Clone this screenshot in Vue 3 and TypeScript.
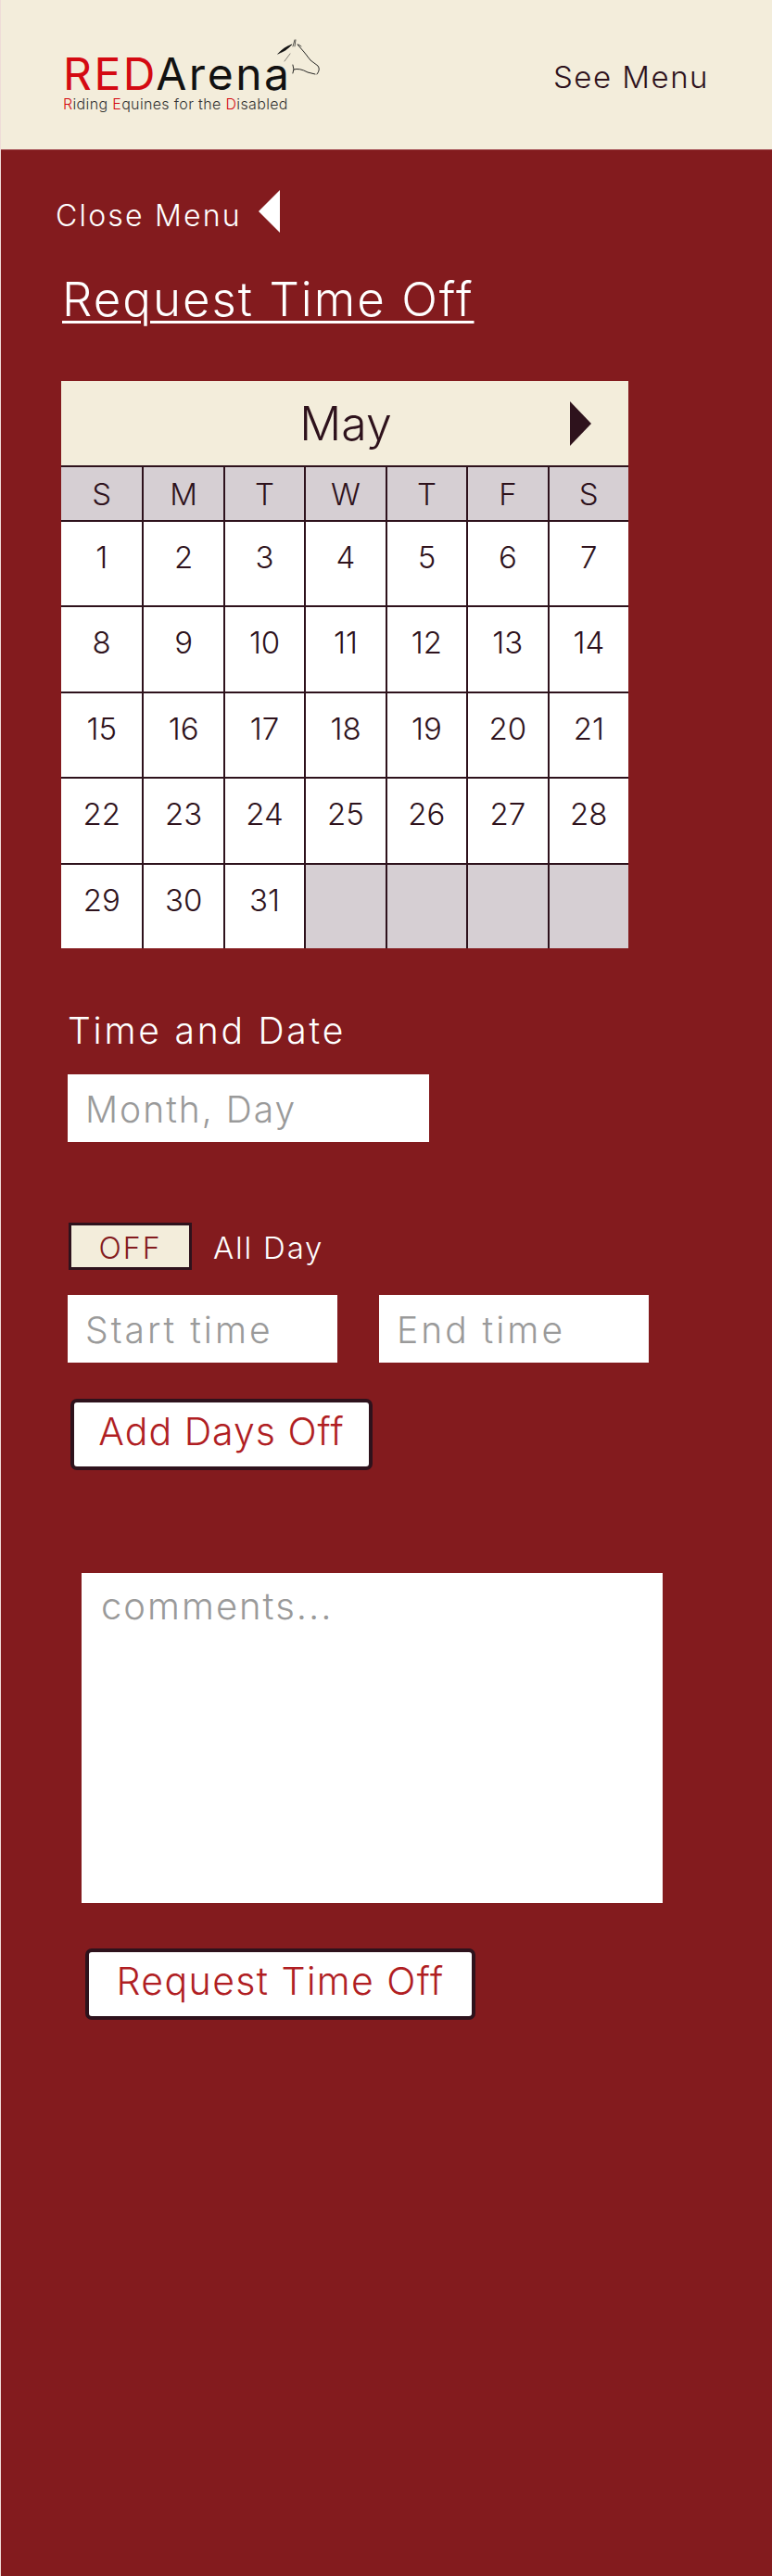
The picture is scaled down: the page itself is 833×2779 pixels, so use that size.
<script setup lang="ts">
const weekdays = ['S', 'M', 'T', 'W', 'T', 'F', 'S']
const days: (number | null)[] = [
  ...Array.from({ length: 31 }, (_, i) => i + 1),
  null,
  null,
  null,
  null,
]
</script>

<template>
  <div class="page">
    <header class="top-bar">
      <div class="logo">
        <div class="logo-name"><span class="logo-red">RED</span>Arena</div>
        <div class="logo-tag">
          <span class="logo-red">R</span>iding <span class="logo-red">E</span>quines for the
          <span class="logo-red">D</span>isabled
        </div>
        <svg class="logo-horse" viewBox="0 0 60 50" fill="none" stroke="#111" stroke-width="0.9" stroke-linecap="round">
          <path d="M26 10 L33 18 L40 27 L48 33 Q51 37 47 42" />
          <path d="M21 32 Q23 37 21 41 M22 37 Q28 35 37 40 L45 42" />
          <path d="M5 20 Q11 13 20 10 Q14 17 5 20 Z" fill="#111" stroke-width="0.6" />
          <path d="M21 12 L23 5 M23 12 L24 5 M27 10 L30 12" stroke-width="0.7" />
          <path d="M12 28 L18 20" stroke-width="0.5" />
        </svg>
      </div>
      <span class="see-menu">See Menu</span>
    </header>

    <main class="content">
      <div class="close-menu">
        <span class="close-text">Close Menu</span>
        <span class="arrow-left"></span>
      </div>

      <h1 class="title">Request Time Off</h1>

      <section class="calendar">
        <div class="cal-head">
          <span class="cal-month">May</span>
          <span class="arrow-right"></span>
        </div>
        <div class="cal-weekdays">
          <div v-for="(d, i) in weekdays" :key="i" class="weekday">{{ d }}</div>
        </div>
        <div class="cal-days">
          <div v-for="(d, i) in days" :key="i" class="day" :class="{ 'day--empty': d === null }">{{ d }}</div>
        </div>
      </section>

      <section class="date-form">
        <label class="field-label">Time and Date</label>
        <div class="input input--date">Month, Day</div>

        <div class="all-day">
          <span class="toggle">OFF</span>
          <span class="all-day-text">All Day</span>
        </div>

        <div class="time-row">
          <div class="input input--time">Start time</div>
          <div class="input input--time">End time</div>
        </div>

        <button class="btn btn--add">Add Days Off</button>
      </section>

      <section class="comments-form">
        <div class="comments">comments...</div>
        <button class="btn btn--request">Request Time Off</button>
      </section>
    </main>
  </div>
</template>

<style>
html,
body {
  margin: 0;
  background: #831b1e;
}
</style>

<style scoped>
.page {
  width: 833px;
  height: 2779px;
  box-sizing: border-box;
  border-left: 1px solid #efdcd8;
  background: #831b1e;
  color: #2e121c;
  font-family: Inter, "Open Sans", sans-serif;
  font-weight: 350;
  overflow: hidden;
}

.top-bar {
  height: 162px;
  box-sizing: border-box;
  background: #f3eddb;
  display: flex;
  align-items: flex-start;
  justify-content: space-between;
  padding: 0 68px 0 67px;
  border-bottom: 1px solid #a8565a;
}

.logo {
  position: relative;
  margin-top: 58px;
  width: 276px;
  color: #111;
}

.logo-name {
  font-size: 48px;
  line-height: 44px;
  font-weight: 400;
  letter-spacing: 2.5px;
}

.logo-tag {
  font-size: 16px;
  line-height: 18px;
  margin-top: 1px;
  font-weight: 300;
  letter-spacing: 0.35px;
  color: #333;
}

.logo-red {
  color: #d40a12;
}

.logo-horse {
  position: absolute;
  left: 227px;
  top: -20px;
  width: 60px;
  height: 50px;
}

.see-menu {
  margin-top: 63px;
  font-size: 33px;
  line-height: 40px;
  letter-spacing: 1.5px;
}

.content {
  padding: 43px 0 0 65px;
}

.close-menu {
  display: flex;
  align-items: flex-start;
  gap: 18px;
  margin-left: -6px;
  color: #fff;
  font-size: 32px;
  line-height: 46px;
  letter-spacing: 2.2px;
}

.close-text {
  margin-top: 5px;
}

.arrow-left {
  width: 0;
  height: 0;
  border-top: 23px solid transparent;
  border-bottom: 23px solid transparent;
  border-right: 23px solid #fff;
}

.title {
  margin: 36px 0 0 1px;
  color: #fff;
  font-size: 51px;
  line-height: 62px;
  font-weight: 350;
  letter-spacing: 2px;
  display: inline-block;
  text-decoration: underline;
  text-decoration-thickness: 3px;
  text-underline-offset: 5px;
}

.calendar {
  width: 612px;
  margin-top: 57px;
}

.cal-head {
  height: 91px;
  background: #f3eddb;
  display: flex;
  align-items: center;
  justify-content: center;
  position: relative;
}

.cal-month {
  font-size: 50px;
  line-height: 60px;
  margin-left: 2px;
}

.arrow-right {
  position: absolute;
  right: 40px;
  top: 22px;
  width: 0;
  height: 0;
  border-top: 24px solid transparent;
  border-bottom: 24px solid transparent;
  border-left: 23px solid #2e121c;
}

.cal-weekdays,
.cal-days {
  display: grid;
  grid-template-columns: repeat(7, 1fr);
}

.weekday,
.day {
  box-sizing: border-box;
  border-top: 2px solid #2e121c;
  border-left: 2px solid #2e121c;
  display: flex;
  justify-content: center;
  font-size: 33px;
}

.weekday:first-child,
.day:nth-child(7n + 1) {
  border-left: none;
}

.weekday {
  height: 59px;
  background: #d6cfd3;
  align-items: center;
  line-height: 40px;
}

.day {
  height: 92.4px;
  background: #fff;
  padding-top: 17px;
  line-height: 42px;
}

.day--empty {
  background: #d6cfd3;
}

.date-form {
  margin-left: 7px;
  margin-top: 65px;
}

.field-label {
  display: block;
  color: #fff;
  font-size: 39px;
  line-height: 48px;
  letter-spacing: 2.8px;
}

.input {
  box-sizing: border-box;
  background: #fff;
  color: #9a9a9a;
  font-size: 39px;
  height: 73px;
  line-height: 75px;
  padding-left: 19px;
}

.input--date {
  width: 390px;
  margin-top: 23px;
  letter-spacing: 2px;
}

.input--time {
  width: 291px;
  letter-spacing: 3px;
}

.all-day {
  display: flex;
  align-items: center;
  gap: 23px;
  margin-top: 87px;
  margin-left: 1px;
}

.toggle {
  box-sizing: border-box;
  width: 133px;
  height: 51px;
  background: #f3eddb;
  border: 3px solid #2e121c;
  color: #831b1e;
  text-align: center;
  font-size: 32px;
  line-height: 49px;
  letter-spacing: 2px;
}

.all-day-text {
  color: #fff;
  font-size: 33px;
  line-height: 40px;
  letter-spacing: 1.8px;
  margin-top: 4px;
}

.time-row {
  display: flex;
  gap: 45px;
  margin-top: 27px;
}

.btn {
  display: block;
  box-sizing: border-box;
  background: #fff;
  border: 4px solid #2e121c;
  border-radius: 7px;
  color: #b01e23;
  font-family: inherit;
  font-weight: 350;
  font-size: 41px;
  height: 77px;
  padding: 0 0 6px;
  text-align: center;
  letter-spacing: 1px;
}

.btn--add {
  width: 326px;
  margin: 39px 0 0 3px;
}

.comments-form {
  margin: 111px 0 0 22px;
}

.comments {
  box-sizing: border-box;
  width: 627px;
  height: 356px;
  background: #fff;
  color: #9a9a9a;
  font-size: 40px;
  line-height: 48px;
  padding: 12px 0 0 21px;
  letter-spacing: 2px;
}

.btn--request {
  width: 421px;
  margin: 49px 0 0 4px;
  letter-spacing: 1.4px;
}
</style>
